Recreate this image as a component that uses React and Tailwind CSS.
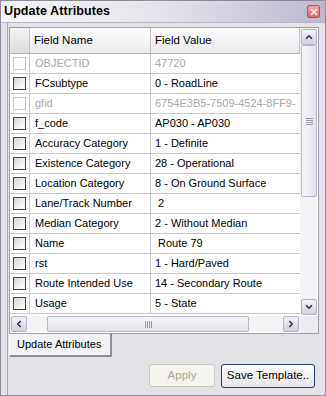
import { X, ChevronUp, ChevronDown, ChevronLeft, ChevronRight } from "lucide-react";

const rows = [
  { name: "OBJECTID", value: "47720", disabled: true },
  { name: "FCsubtype", value: "0 - RoadLine" },
  { name: "gfid", value: "6754E3B5-7509-4524-8FF9-", disabled: true },
  { name: "f_code", value: "AP030 - AP030" },
  { name: "Accuracy Category", value: "1 - Definite" },
  { name: "Existence Category", value: "28 - Operational" },
  { name: "Location Category", value: "8 - On Ground Surface" },
  { name: "Lane/Track Number", value: " 2" },
  { name: "Median Category", value: "2 - Without Median" },
  { name: "Name", value: " Route 79" },
  { name: "rst", value: "1 - Hard/Paved" },
  { name: "Route Intended Use", value: "14 - Secondary Route" },
  { name: "Usage", value: "5 - State" },
];

function ArrowBox({ icon: Icon, className = "" }) {
  return (
    <div
      className={`flex items-center justify-center rounded-[2px] border border-[#b4b4c6] bg-gradient-to-b from-[#f2f2f6] to-[#d3d3df] ${className}`}
    >
      <Icon className="h-[10px] w-[10px] text-[#2f2f4a]" strokeWidth={4} />
    </div>
  );
}

function Grip({ vertical }) {
  return (
    <div className={`flex ${vertical ? "flex-col" : "flex-row"} gap-[1px]`}>
      {[0, 1, 2, 3].map((i) => (
        <div
          key={i}
          className={vertical ? "h-[1px] w-[7px] bg-[#9a9aac]" : "h-[7px] w-[1px] bg-[#9a9aac]"}
        />
      ))}
    </div>
  );
}

function Checkbox({ disabled }) {
  return (
    <div
      className={
        disabled
          ? "h-[13px] w-[13px] border border-[#c9c7bc] bg-white"
          : "h-[13px] w-[13px] border border-[#1c5180] bg-gradient-to-br from-[#d8d8d2] to-white"
      }
    />
  );
}

export default function App() {
  return (
    <div
      className="flex h-[396px] w-[326px] flex-col border border-[#8c8c9c] bg-[#e3e2e7] text-[11px] text-black"
      style={{ fontFamily: '"Liberation Sans", Arial, sans-serif' }}
    >
      {/* title bar */}
      <div className="flex h-[21px] items-center justify-between bg-gradient-to-r from-[#f6f6f8] via-[#e4e4ea] to-[#bab9cd] pl-[3px] pr-[5px]">
        <span className="text-[12.5px] font-bold tracking-[0.1px] text-black">Update Attributes</span>
        <div className="flex h-[13px] w-[13px] items-center justify-center rounded-[2px] border border-[#c64b4b] bg-gradient-to-b from-[#f4a3a3] to-[#e46a6a]">
          <X className="h-[10px] w-[10px] text-white" strokeWidth={3.5} />
        </div>
      </div>

      <div className="flex flex-1 flex-col border-t border-[#b9b8c8] pl-[6px] pr-[3px]">
        <div className="flex flex-1 flex-col border-l border-[#a6a6b2] pl-[1px] pt-[4px]">
          {/* grid box */}
          <div className="flex h-[307px] w-[310px] flex-col border border-[#a3a3ad] bg-white">
            <div className="flex h-[287px]">
              <div className="flex w-[290px] flex-col overflow-hidden">
                {/* header */}
                <div className="flex h-[26px] border-b border-[#b5b5b5] bg-gradient-to-b from-white to-[#e9e9ec]">
                  <div className="w-[20px] shrink-0 border-r border-[#c4c4c4] bg-gradient-to-b from-[#f4f4f4] to-[#dcdcdc]" />
                  <div className="flex w-[121px] shrink-0 items-center border-r border-[#c4c4c4] pl-[4px] text-[11.5px]">
                    Field Name
                  </div>
                  <div className="flex flex-1 items-center border-r border-[#c4c4c4] pl-[4px] text-[11.5px]">
                    Field Value
                  </div>
                </div>
                {rows.map((r) => (
                  <div key={r.name} className="flex h-[20px] shrink-0 border-b border-[#c6c6c6]">
                    <div className="flex w-[20px] shrink-0 items-center justify-center border-r border-[#c6c6c6]">
                      <Checkbox disabled={r.disabled} />
                    </div>
                    <div
                      className={`flex w-[121px] shrink-0 items-center border-r border-[#c6c6c6] pl-[5px] ${
                        r.disabled ? "text-[#a8a7ac]" : ""
                      }`}
                    >
                      {r.name}
                    </div>
                    <div
                      className={`flex flex-1 items-center whitespace-pre pl-[4px] ${
                        r.disabled ? "text-[#a8a7ac]" : ""
                      }`}
                    >
                      {r.value}
                    </div>
                  </div>
                ))}
              </div>
              {/* vertical scrollbar */}
              <div className="flex w-[17px] flex-col bg-[#f3f3f6] pl-[1px] pt-[1px]">
                <ArrowBox icon={ChevronUp} className="h-[16px] w-[16px]" />
                <div className="flex h-[152px] w-[16px] items-center justify-center rounded-[2px] border border-[#b8b8c8] bg-gradient-to-r from-[#f6f6f9] to-[#e2e2ea]">
                  <Grip vertical />
                </div>
                <div className="flex-1" />
                <ArrowBox icon={ChevronDown} className="h-[16px] w-[16px]" />
              </div>
            </div>
            {/* horizontal scrollbar */}
            <div className="mt-[1px] flex h-[17px] items-start">
              <div className="flex w-[290px] items-center bg-[#f3f3f6] pl-[1px]">
                <ArrowBox icon={ChevronLeft} className="h-[16px] w-[16px]" />
                <div className="w-[20px]" />
                <div className="flex h-[16px] w-[202px] items-center justify-center rounded-[2px] border border-[#b8b8c8] bg-gradient-to-b from-[#f6f6f9] to-[#e2e2ea]">
                  <Grip />
                </div>
                <div className="flex-1" />
                <ArrowBox icon={ChevronRight} className="mr-[1px] h-[16px] w-[16px]" />
              </div>
              <div className="h-[17px] flex-1 bg-[#ebeaee]" />
            </div>
          </div>

          {/* tab */}
          <div className="flex">
            <div className="flex h-[23px] w-[103px] items-center border-b-2 border-r-2 border-[#8e8e98] border-l border-l-white bg-[#f2f2f4] pl-[7px]">
              Update Attributes
            </div>
          </div>

          {/* buttons */}
          <div className="mt-[7px] flex justify-end gap-[6px] pr-[7px]">
            <div className="flex h-[23px] w-[66px] items-center justify-center rounded-[3px] border border-[#cac8bd] bg-[#f4f3ee] text-[11.5px] text-[#aca899]">
              Apply
            </div>
            <div className="flex h-[24px] w-[94px] items-center justify-center rounded-[3px] border border-[#1d3f6e] bg-gradient-to-b from-white to-[#e6e5ea] text-[11.5px]">
              Save Template..
            </div>
          </div>
        </div>
      </div>
    </div>
  );
}
